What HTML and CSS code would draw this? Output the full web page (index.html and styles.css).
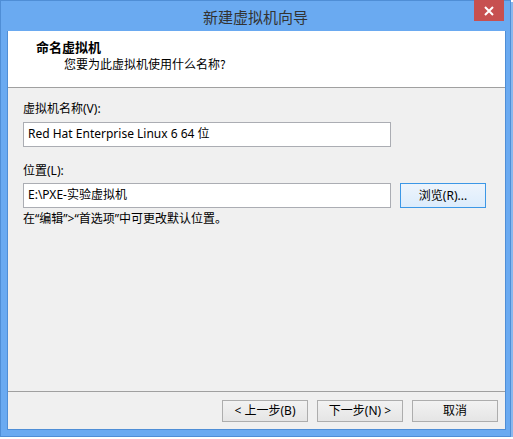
FILE: index.html
```html
<!DOCTYPE html>
<html lang="zh-CN">
<head>
<meta charset="utf-8">
<title>新建虚拟机向导</title>
<link rel="stylesheet" href="styles.css">
</head>
<body>
<div class="window">
  <div class="titlebar">
    <div class="title">新建虚拟机向导</div>
    <div class="close">
      <svg width="10" height="10" viewBox="0 0 10 10"><path d="M1 1L9 9M9 1L1 9" stroke="#fff" stroke-width="2"/></svg>
    </div>
  </div>
  <div class="client">
    <div class="header">
      <div class="h-title">命名虚拟机</div>
      <div class="h-sub">您要为此虚拟机使用什么名称?</div>
    </div>
    <div class="content">
      <div class="label l1">虚拟机名称(V):</div>
      <div class="field wide">Red Hat Enterprise Linux 6 64 位</div>
      <div class="label l2">位置(L):</div>
      <div class="row">
        <div class="field wide">E:\PXE-实验虚拟机</div>
        <div class="btn default">浏览(R)...</div>
      </div>
      <div class="note">在“编辑”&gt;“首选项”中可更改默认位置。</div>
    </div>
    <div class="footer">
      <div class="btn">&lt; 上一步(B)</div>
      <div class="btn">下一步(N) &gt;</div>
      <div class="btn">取消</div>
    </div>
  </div>
</div>
</body>
</html>
```
FILE: styles.css
```css
html, body {
  margin: 0;
  padding: 0;
  background: #ffffff;
}
body {
  font-family: "Noto Sans", "Noto Sans CJK SC", sans-serif;
  font-size: 12px;
  color: #000;
}
.window {
  position: relative;
  width: 509px;
  height: 435px;
  background: #6aaaf1;
  border: 1px solid #4f8ed6;
  box-shadow: 2px 2px 0 #8ab8ee;
  display: flex;
  flex-direction: column;
}
.titlebar {
  height: 30px;
  display: flex;
  justify-content: center;
  align-items: center;
}
.title {
  font-family: "Noto Sans CJK SC", sans-serif;
  font-size: 15px;
  color: #333;
  line-height: 20px;
  margin-top: 1px;
}
.close {
  position: absolute;
  top: -1px;
  right: 6px;
  width: 30px;
  height: 21px;
  background: #c75050;
  display: flex;
  align-items: center;
  justify-content: center;
}
.client {
  margin: 0 4px 0 6px;
  height: 399px;
  border: 1px solid #4f8ed6;
  border-top: none;
  background: #f0f0f0;
  display: flex;
  flex-direction: column;
  box-sizing: border-box;
  width: 499px;
}
.header {
  height: 56px;
  background: #fff;
  border-bottom: 1px solid #a0a0a0;
  box-sizing: content-box;
}
.h-title {
  font-family: "Noto Sans CJK SC", sans-serif;
  font-weight: bold;
  font-size: 13px;
  line-height: 16px;
  margin: 8px 0 0 28px;
}
.h-sub {
  font-family: "Noto Sans CJK SC", sans-serif;
  line-height: 16px;
  margin: 1px 0 0 56px;
}
.content {
  flex: 1;
  padding: 13px 0 0 15px;
}
.label {
  line-height: 16px;
}
.l1 { margin-bottom: 5px; }
.l2 { margin-top: 16px; margin-bottom: 4px; }
.field {
  height: 25px;
  box-sizing: border-box;
  border: 1px solid #abadb3;
  background: #fff;
  line-height: 22px;
  padding-left: 4px;
}
.wide { width: 368px; }
.row {
  display: flex;
  gap: 9px;
  align-items: flex-start;
}
.btn {
  width: 86px;
  height: 22px;
  box-sizing: border-box;
  border: 1px solid #adadad;
  background: linear-gradient(#f2f2f2, #e5e5e5);
  text-align: center;
  line-height: 20px;
}
.row .btn {
  height: 25px;
  line-height: 23px;
}
.btn.default {
  border-color: #3c97e6;
  background: linear-gradient(#edf4fc, #dcecfc);
}
.note {
  margin-top: 3px;
  line-height: 16px;
}
.footer {
  border-top: 1px solid #a0a0a0;
  padding: 8px 7px 7px 0;
  display: flex;
  justify-content: flex-end;
  gap: 9px;
}
```
